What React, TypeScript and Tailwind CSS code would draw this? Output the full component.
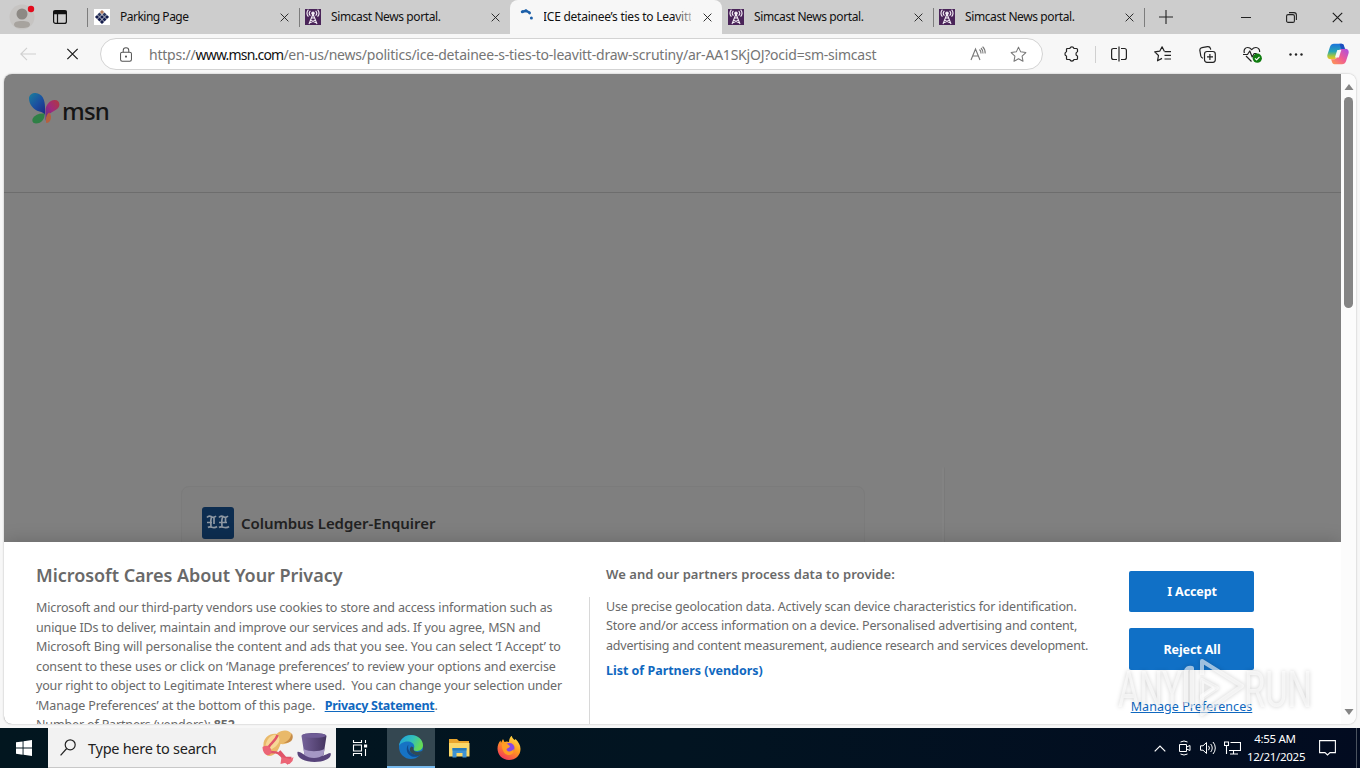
import type { ReactNode } from 'react'

type TabProps = {
  title: string
  icon: ReactNode
  active?: boolean
  divider?: boolean
  titleClass?: string
}

function CloseIcon({ className = '' }: { className?: string }) {
  return (
    <svg viewBox="0 0 10 10" className={className} fill="none" stroke="#1b1b1b" strokeWidth="1">
      <path d="M.7.7l8.6 8.6M9.3.7L.7 9.3" />
    </svg>
  )
}

function ParkingIcon() {
  return (
    <svg viewBox="0 0 16 16" className="h-4 w-4">
      <path fill="#fff" d="M0 0h16v16H0z" />
      <g transform="rotate(45 8 8)">
        <path fill="#b07a5c" d="M3 3h3v3H3z" />
        <path fill="#2e3a60" d="M6.500 3h3v3h-3zM3 6.500h3v3H3z" />
        <path fill="#151d4c" d="M10 3h3v3h-3zM6.500 6.500h3v3h-3zM10 6.500h3v3h-3zM3 10h3v3H3zM6.500 10h3v3h-3zM10 10h3v3h-3z" />
      </g>
    </svg>
  )
}

function TowerIcon() {
  return (
    <svg viewBox="0 0 16 16" className="h-4 w-4" fill="none" stroke="#f4eef6" strokeWidth="1.1">
      <path fill="#4a2459" stroke="none" d="M0 0h16v16H0z" />
      <path d="M8 5L4 15M8 5l4 10M6.5 9h3M5.6 11.2l5.4 2.6M10.4 11.2L5 13.8" />
      <circle cx="8" cy="4.2" r="1.2" fill="#f4eef6" />
      <path d="M5.4 1.8a3.4 3.4 0 0 0 0 4.8M10.6 1.8a3.4 3.4 0 0 1 0 4.8M3.4.7a5.5 5.5 0 0 0 0 7M12.6.7a5.5 5.5 0 0 1 0 7" />
    </svg>
  )
}

function LoadingIcon() {
  return (
    <svg viewBox="0 0 16 16" className="h-4 w-4" fill="#1c5fa8">
      <circle cx="4.3" cy="2.7" r="1.5" />
      <circle cx="8" cy="1.8" r="1.5" />
      <circle cx="11.6" cy="4" r="1.4" />
      <circle cx="13.4" cy="9" r="1.5" />
      <path d="M4 1.5l4-1 4 2-1 2-3-1.2-4 .8z" />
    </svg>
  )
}

function Tab({ title, icon, active, divider, titleClass = '' }: TabProps) {
  return (
    <div
      className={
        active
          ? 'relative flex h-[34px] w-[212px] shrink-0 items-center rounded-t-lg bg-[#f7f7f7] pl-[8px] pr-[10px]'
          : 'relative flex h-[34px] w-[211px] shrink-0 items-center pl-[6px] pr-[10px]'
      }
    >
      {icon}
      <span className="ml-[10px] w-[147px] overflow-hidden whitespace-nowrap text-[12px] text-[#111]">
        <span className={titleClass}>{title}</span>
      </span>
      {active && <span className="absolute right-[24px] top-2 h-5 w-6 bg-gradient-to-r from-transparent to-[#f7f7f7]" />}
      <CloseIcon className="absolute right-[10px] top-[13px] h-[9px] w-[9px]" />
      {divider && <span className="absolute -right-px top-[8px] h-[19px] w-px bg-[#7d7d7d]" />}
    </div>
  )
}

function TabStrip() {
  return (
    <div className="flex h-[34px] items-center bg-[#cdcdcd]">
      <svg viewBox="0 0 26 26" className="ml-[9px] h-[26px] w-[26px]">
        <circle cx="13" cy="13" r="12.5" fill="#c6c4c2" />
        <circle cx="13" cy="10" r="5.5" fill="#8d8984" />
        <path fill="#a7a39e" d="M5 20.5C5 18 8 17 13 17s8 1 8 3.500S18 24 13 24s-8-1-8-3.500z" />
        <circle cx="22" cy="5" r="3.2" fill="#e30b1c" />
      </svg>
      <svg viewBox="0 0 14 14" className="ml-[18px] h-[14px] w-[14px]" fill="none" stroke="#111" strokeWidth="1.2">
        <rect x=".6" y=".6" width="12.8" height="12.800" rx="2" />
        <path fill="#111" d="M1 1h12v2.600H1z" />
        <path d="M4.500 4v9" />
      </svg>
      <span className="ml-[20px] h-[19px] w-px bg-[#7d7d7d]" />
      <Tab title="Parking Page" icon={<ParkingIcon />} divider titleClass="tracking-[-0.5px]" />
      <Tab title="Simcast News portal." icon={<TowerIcon />} titleClass="tracking-[-0.4px]" />
      <Tab title="ICE detainee’s ties to Leavitt" icon={<LoadingIcon />} active titleClass="-ml-px tracking-[-0.25px]" />
      <Tab title="Simcast News portal." icon={<TowerIcon />} divider titleClass="tracking-[-0.4px]" />
      <Tab title="Simcast News portal." icon={<TowerIcon />} divider titleClass="tracking-[-0.4px]" />
      <svg viewBox="0 0 14 14" className="ml-[15px] h-[14px] w-[14px]" stroke="#222" strokeWidth="1.100">
        <path d="M7 0v14M0 7h14" />
      </svg>
      <div className="ml-auto mr-[17px] flex items-center gap-[35px]">
        <span className="h-px w-[10px] bg-[#222]" />
        <svg viewBox="0 0 11 11" className="h-[11px] w-[11px]" fill="none" stroke="#222" strokeWidth="1.100">
          <rect x=".6" y="2.600" width="7.800" height="7.800" rx="1.500" />
          <path d="M3 .600h5a2.400 2.400 0 0 1 2.400 2.400v5" />
        </svg>
        <CloseIcon className="h-[11px] w-[11px]" />
      </div>
    </div>
  )
}

function CopilotIcon() {
  return (
    <svg viewBox="0 0 22 22" className="h-[22px] w-[22px]">
      <defs>
        <linearGradient id="cpA" x1="0" y1="0" x2="0" y2="1">
          <stop offset="0" stopColor="#1b74dd" />
          <stop offset=".5" stopColor="#28a6b5" />
          <stop offset=".8" stopColor="#a8c93a" />
          <stop offset="1" stopColor="#f2c02c" />
        </linearGradient>
        <linearGradient id="cpB" x1="1" y1="0" x2="0" y2="1">
          <stop offset="0" stopColor="#a64fe8" />
          <stop offset=".5" stopColor="#ef5c93" />
          <stop offset="1" stopColor="#ff9b4e" />
        </linearGradient>
      </defs>
      <path fill="url(#cpA)" d="M7 .8h7.500c1.500 0 2 .8 2.500 2.200l.9 3h-3.200c-1.700 0-2.400.8-2.900 2.400L9.700 14c-.5 1.600-1.400 2.200-3 2.200H3.500C.8 16.200-.2 14 .5 11.500L3 3.800C3.700 1.700 5 .8 7 .8z" />
      <path fill="url(#cpB)" d="M15 21.200H7.500c-1.500 0-2-.8-2.500-2.200l-.9-2.800h3c1.700 0 2.600-.8 3.100-2.400L12.300 8c.5-1.600 1.400-2.200 3-2.200h3.200c2.700 0 3.700 2.200 3 4.700L19 18.200c-.7 2.100-2 3-4 3z" />
      <path fill="#1d4fc0" d="M12.500.8h2c1.500 0 2 .8 2.500 2.200l.9 3h-3.200c-1 0-1.500-3.500-2.200-5.200z" />
      <path fill="#f7f7f7" d="M10.300 7h4l-2.400 7.500h-4z" />
    </svg>
  )
}

function Toolbar() {
  return (
    <div className="flex h-10 items-center bg-[#f7f7f7] text-[#222]">
      <svg viewBox="0 0 16 14" className="ml-[20px] h-[14px] w-4" fill="none" stroke="#cfcfcf" strokeWidth="1.100">
        <path d="M16 7H1M7 .8L.8 7 7 13.200" />
      </svg>
      <CloseIcon className="ml-[30px] h-3 w-[13px]" />
      <div className="ml-[21px] flex h-8 w-[943px] items-center rounded-full border border-[#d3d3d3] bg-white pl-[19px] text-[#757575]">
        <svg viewBox="0 0 13 16" className="h-[15px] w-3" fill="none" stroke="#555" strokeWidth="1.100">
          <rect x=".6" y="5.500" width="11.800" height="9.700" rx="1.800" />
          <path d="M3.500 5.500V3.600a3 3 0 0 1 6 0v1.900" />
          <circle cx="6.500" cy="10.300" r=".6" fill="#555" />
        </svg>
        <span className="ml-[17px] whitespace-nowrap text-[14px] tracking-[-0.22px]">
          https://<span className="tracking-[-0.8px] text-[#111]">www.msn.com</span>/en-us/news/politics/ice-detainee-s-ties-to-leavitt-draw-scrutiny/ar-AA1SKjOJ?ocid=sm-simcast
        </span>
        <div className="ml-auto mr-[15px] flex items-center gap-[23px]">
          <svg viewBox="0 0 17 16" className="h-4 w-[17px]" fill="none" stroke="#777" strokeWidth="1.100">
            <path d="M1 14L5.500 3 10 14M2.700 10h5.700M9.500 3.500a5 5 0 0 1 1.500 4M11 2a7 7 0 0 1 2 5.500M12.600.7a9 9 0 0 1 2.600 6.800" />
          </svg>
          <svg viewBox="0 0 18 18" className="h-[17px] w-[17px]" fill="none" stroke="#777" strokeWidth="1.100" strokeLinejoin="round">
            <path d="M9 1.200l2.300 5 5.500.7-4 3.800 1 5.500L9 13.500l-4.800 2.700 1-5.500-4-3.800 5.500-.7z" />
          </svg>
        </div>
      </div>
      <svg viewBox="0 0 16 16" className="ml-[21px] h-4 w-4" fill="none" stroke="#222" strokeWidth="1.200" strokeLinejoin="round">
        <path d="M3.500 2.500h2.300a2.200 2.200 0 0 1 4.200 0h2.500q1 0 1 1v2.300a2.200 2.200 0 0 0 0 4.200v2.500q0 1-1 1H10a2.200 2.200 0 0 1-4.200 0H3.500q-1 0-1-1V10a2.200 2.200 0 0 1 0-4.200V3.500q0-1 1-1z" />
      </svg>
      <span className="ml-[15px] h-[17px] w-px bg-[#d0d0d0]" />
      <svg viewBox="0 0 16 16" className="ml-[15px] h-4 w-4" fill="none" stroke="#222" strokeWidth="1.200">
        <path d="M6 2.500H2.600q-2 0-2 2v7q0 2 2 2H6M10 2.500h3.400q2 0 2 2v7q0 2-2 2H10M8 .5v15" />
      </svg>
      <svg viewBox="0 0 18 16" className="ml-[27px] h-4 w-[18px]" fill="none" stroke="#222" strokeWidth="1.200" strokeLinejoin="round">
        <path d="M10.300 5.200L8.100.8 5.700 5.200l-5 .7 3.800 3.600-1 5.300 4.500-2.400M10.500 5.600H17M10.500 9.300H17M10.500 13H17" />
      </svg>
      <svg viewBox="0 0 17 17" className="ml-[27px] h-[17px] w-[17px]" fill="none" stroke="#222" strokeWidth="1.200">
        <rect x="5.500" y="5.500" width="10.800" height="10.800" rx="2.500" />
        <path d="M10.900 8v6M8 10.900h6M4 12.200c-1.300-.2-2-1-2.200-2.200L.9 4.700C.6 3 1.400 2 3 1.700l5.500-1c1.500-.2 2.600.4 3 2l.2 1" />
      </svg>
      <svg viewBox="0 0 19 17" className="ml-[27px] h-[17px] w-[19px]" fill="none" stroke="#222" strokeWidth="1.200" strokeLinejoin="round">
        <path d="M1.400 7C.4 4 2 1.500 4.700 1.500c1.800 0 3 1 4 2.200 1-1.200 2.300-2.200 4.200-2.200 2.500 0 4 2 3.700 4.500M3 10l5.500 5.500M0 8.500h4.500L6.800 5l2.400 6 2-3.500h2.500" />
        <circle cx="14.300" cy="12.200" r="4.600" fill="#107c10" stroke="none" />
        <path stroke="#fff" d="M12 12.300l1.600 1.600 2.900-3" />
      </svg>
      <svg viewBox="0 0 14 3" className="ml-[27px] h-[3px] w-[14px]" fill="#222">
        <circle cx="1.500" cy="1.500" r="1.200" />
        <circle cx="7" cy="1.500" r="1.200" />
        <circle cx="12.500" cy="1.500" r="1.200" />
      </svg>
      <span className="ml-auto mr-[11px]">
        <CopilotIcon />
      </span>
    </div>
  )
}

function MsnLogo() {
  return (
    <div className="flex items-center">
      <svg viewBox="0 0 31 31" className="h-[31px] w-[31px]">
        <defs>
          <linearGradient id="mA" x1="0" y1="0" x2=".8" y2="1">
            <stop offset="0" stopColor="#1a7f9c" />
            <stop offset=".55" stopColor="#1b50a0" />
            <stop offset="1" stopColor="#1b2f86" />
          </linearGradient>
          <linearGradient id="mB" x1="0" y1="1" x2="1" y2="0">
            <stop offset="0" stopColor="#5b2a94" />
            <stop offset=".5" stopColor="#a02a7c" />
            <stop offset="1" stopColor="#b03a3e" />
          </linearGradient>
        </defs>
        <path fill="url(#mA)" d="M0 5.500C0 2 3 0 6.500 0 13.500.5 16 7 16 14v8c-1-2-3-3-5.500-3.500C4 17 0 10.500 0 5.500z" />
        <path fill="#2f8046" d="M15.500 20.500c.5 5.500-3 10-8.500 10-3.500 0-4.500-3-3-5.500 2-3.200 6-5 11.500-4.500z" />
        <path fill="url(#mB)" d="M16.500 28V18c0-6 4-10.500 9-11 4-.2 6 3.500 4.300 7-2 4.500-12.300 5-13.300 14z" />
        <path fill="#b5603f" d="M17.200 30c-.8-4.500 0-8.500 3-10.500 3.500 4 1.500 10.500-3 10.500z" />
      </svg>
      <span className="ml-[2px] mt-[5px] text-[24px] font-medium leading-[30px] tracking-[-0.8px] text-[#151515]">msn</span>
    </div>
  )
}

function Article() {
  return (
    <div className="flex h-full flex-col bg-[#808080]">
      <header className="h-[119px] shrink-0 border-b border-[#6d6d6d] pl-[25px] pt-[17px]">
        <MsnLogo />
      </header>
      <div className="mt-auto flex h-[257px] items-end pl-[177px]">
        <div className="h-[238px] w-[684px] rounded-t-lg border border-[#7b7b7b] bg-[#7f7f7f] pl-[20px] pt-[20px]">
          <div className="flex items-center">
            <div className="flex h-8 w-8 items-center justify-center rounded-[3px] bg-[#0d2d50]">
              <svg viewBox="0 0 24 18" className="h-[18px] w-6" fill="none" stroke="#8d97a2" strokeWidth="1.700">
                <path d="M1 3.500c2-2.500 4-1 5-.5s2.500.5 4-1M6 2.500c-2 3-1 8-1 10M2 13.500c3-2.500 5 2.500 9-1M1 8.500h5M8 3v7M13 3.500c2-2.500 4-1 5-.5s2.500.5 4-1M17 2.500c-2 3-1 8-1 10M13 13.500c3-2.500 6 2.500 10-1M13 8.500h8M19.500 4v5" />
              </svg>
            </div>
            <span className="ml-[7px] whitespace-nowrap text-[15px] font-semibold tracking-[-0.06px] text-[#222]">Columbus Ledger-Enquirer</span>
          </div>
        </div>
        <div className="ml-[77px] h-[257px] w-[3px] rounded-t-sm border-r border-[#7a7a7a] bg-[#838383]" />
      </div>
    </div>
  )
}

function PrivacyBanner() {
  return (
    <div className="absolute inset-x-0 bottom-0 flex h-[182px] overflow-hidden bg-white text-[#696969] shadow-[0_0_18px_rgba(0,0,0,0.2)]">
      <div className="w-[554px] shrink-0 whitespace-nowrap pl-8 pt-[21px]">
        <h2 className="text-[18px] font-semibold leading-6 tracking-[-0.04px]">Microsoft Cares About Your Privacy</h2>
        <div className="mt-[11px] text-[12.500px] leading-[19.500px]">
          <p className="tracking-[-0.135px]">Microsoft and our third-party vendors use cookies to store and access information such as</p>
          <p className="tracking-[-0.135px]">unique IDs to deliver, maintain and improve our services and ads. If you agree, MSN and</p>
          <p className="tracking-[-0.1px]">Microsoft Bing will personalise the content and ads that you see. You can select ‘I Accept’ to</p>
          <p className="tracking-[-0.105px]">consent to these uses or click on ‘Manage preferences’ to review your options and exercise</p>
          <p className="tracking-[-0.165px]">your right to object to Legitimate Interest where used.&nbsp; You can change your selection under</p>
          <p className="tracking-[-0.12px]">
            ‘Manage Preferences’ at the bottom of this page.&nbsp;&nbsp;{' '}
            <a className="font-bold tracking-[-0.27px] text-[#1068bf] underline">Privacy Statement</a>.
          </p>
          <p className="tracking-[-0.15px]">
            Number of Partners (vendors): <b>852</b>
          </p>
        </div>
      </div>
      <div className="ml-[31px] mt-[55px] w-px shrink-0 bg-[#d8d8d8]" />
      <div className="ml-4 w-[523px] shrink-0 whitespace-nowrap pt-[23px] text-[12.500px] leading-[19.500px]">
        <h3 className="text-[13px] font-semibold tracking-[0.07px]">We and our partners process data to provide:</h3>
        <div className="mt-[12px]">
          <p className="tracking-[-0.135px]">Use precise geolocation data. Actively scan device characteristics for identification.</p>
          <p className="tracking-[-0.175px]">Store and/or access information on a device. Personalised advertising and content,</p>
          <p className="tracking-[-0.21px]">advertising and content measurement, audience research and services development.</p>
        </div>
        <a className="mt-[6px] block font-bold tracking-[-0.02px] text-[#1068bf]">List of Partners (vendors)</a>
      </div>
      <div className="flex w-[125px] shrink-0 flex-col pt-[29px] text-[12.500px]">
        <button className="h-[41px] rounded-[2px] bg-[#1070c6] pl-px pt-[2px] font-bold tracking-[-0.1px] text-white">I Accept</button>
        <button className="mt-4 h-[42px] rounded-[2px] bg-[#1070c6] pl-px pt-[2px] font-bold tracking-[-0.1px] text-white">Reject All</button>
        <a className="mt-[27px] whitespace-nowrap text-center leading-5 tracking-[0.05px] text-[#1068bf] underline">Manage Preferences</a>
      </div>
    </div>
  )
}

function Watermark() {
  return (
    <svg viewBox="0 0 200 66" className="absolute left-[1114px] top-[656px] h-[66px] w-[200px] drop-shadow-[0_0_2px_rgba(0,0,0,0.3)]">
      <g fill="#fff" fillOpacity=".6" fontFamily="Roboto, sans-serif" fontSize="50">
        <text x="4" y="51" textLength="64" lengthAdjust="spacingAndGlyphs">ANY</text>
        <text x="130" y="51" textLength="68" lengthAdjust="spacingAndGlyphs">RUN</text>
      </g>
      <g fill="none" stroke="#fff" strokeOpacity=".6" strokeWidth="4" strokeLinejoin="round">
        <path d="M88 19V5l40 25-40 28V40l12-8M78 52V12q-6-1-6 4v34" />
        <path fill="#fff" fillOpacity=".5" d="M88 24l15 8-15 10z" />
      </g>
    </svg>
  )
}

function SearchHats() {
  return (
    <svg viewBox="0 0 70 36" className="h-9 w-[71px]">
      <path fill="#e9b96a" d="M2 17C1 8 8 3 15 4c6-5 13-4 15 0 2 6-3 11-11 10-2 7-6 12-11 12-4 0-6-5-6-9z" />
      <path fill="#f7d796" d="M5 12C9 3 17 3 18 9c0 6-7 11-12 11-3-1-2-5-1-8z" />
      <path fill="#c68c48" d="M22 13c4-1 8-6 8-10 3 4 1 11-8 10z" />
      <path fill="none" stroke="#e05468" strokeWidth="2.500" d="M6 20c1-6 8-8 10-15M8 22c5 0 8 0 11 3l8 9M18 21l6 7 6 0" />
      <path fill="#ec6576" d="M1 17c5-3 9 0 9 5-2 6-9 3-9-5zM20 27l9 2 3-2-1 4-3 3-5-1-4 1z" />
      <defs>
        <linearGradient id="hat" x1="0" x2="1">
          <stop offset="0" stopColor="#75629a" />
          <stop offset="1" stopColor="#44345f" />
        </linearGradient>
      </defs>
      <path fill="#57437a" d="M36 22c2-1 6 3 10 4h15c3-1 6-3 8-3 2 5-6 9-16 9s-18-4-17-10z" />
      <path fill="url(#hat)" d="M40 6c0-4 24-4 25 0l-3 19c-4 4-15 4-19 0z" />
      <path fill="#a597c4" d="M42 19c6 3 15 3 21 0l-1 6c-5 4-14 4-19 0z" />
      <ellipse cx="52.500" cy="5.500" rx="12" ry="2.300" fill="#6f5c96" />
    </svg>
  )
}

function EdgeIcon() {
  return (
    <svg viewBox="0 0 24 24" className="h-6 w-6">
      <defs>
        <linearGradient id="edA" x1="0" y1="0" x2="1" y2=".4">
          <stop offset="0" stopColor="#1b9de2" />
          <stop offset=".6" stopColor="#35c1b5" />
          <stop offset="1" stopColor="#65da55" />
        </linearGradient>
      </defs>
      <circle cx="12" cy="12" r="12" fill="#1673c4" />
      <path fill="url(#edA)" d="M0 11C.5 4.800 5.800 0 12 0c6.500 0 12 4.500 12 10.300 0 3.700-3 5.700-6 5.700-2.500 0-4-1-3.600-2 .4-.6.9-1.200.9-2.400C15.300 8.500 12 6.500 8.500 6.500 4 6.500.8 9 0 11z" />
      <path fill="#114a8b" d="M9.500 9.500C7 12 7 17 10.500 20c3 2.700 8 2.500 11.500-.8-5 1.800-10.500-.2-12.300-4.200-.8-2-.7-4-.2-5.500z" />
      <path fill="#324a55" d="M14.500 14c0 3 5 4 9 1.500l1 1-2 3.200c-4 1.500-10-.2-11.500-3.700-.7-2 .3-4 1.500-4.500 1 0 2.500 1 2 2.500z" />
    </svg>
  )
}

function Taskbar() {
  return (
    <div className="flex h-10 items-center bg-linear-to-r from-[#02161f] via-[#021421] to-[#020b20] text-white">
      <svg viewBox="0 0 16 16" className="ml-4 h-4 w-4" fill="#fff">
        <path d="M0 2.300L6.600 1.400v6.200H0zM7.500 1.200L16 0v7.600H7.500zM0 8.500h6.600v6.200L0 13.800zM7.500 8.500H16V16l-8.500-1.200z" />
      </svg>
      <div className="ml-4 flex h-10 w-[288px] items-center border-b border-[#c8c8c8] bg-[#f2f2f2] pl-[12px] text-[#222]">
        <svg viewBox="0 0 16 17" className="h-[17px] w-4" fill="none" stroke="#222" strokeWidth="1.200">
          <circle cx="10.200" cy="5.800" r="5" />
          <path d="M6.700 9.500L.6 16.300" />
        </svg>
        <span className="ml-[12px] mt-[3px] whitespace-nowrap text-[14.500px] tracking-[-0.27px]">Type here to search</span>
        <span className="ml-auto mr-[4px]">
          <SearchHats />
        </span>
      </div>
      <svg viewBox="0 0 16 16" className="ml-4 h-4 w-4" fill="none" stroke="#fff" strokeWidth="1.100">
        <path d="M1.500 0v2.500h8V0M1.500 16v-2.500h8V16M1.500 5h8v6h-8zM13.500 0v3M13.500 9v7" />
        <path fill="#fff" d="M12.600 5h2v2h-2z" />
      </svg>
      <div className="ml-[19px] flex h-10 w-12 items-center justify-center border-b-2 border-[#76b9ed] bg-[#344751]">
        <EdgeIcon />
      </div>
      <svg viewBox="0 0 22 20" className="ml-[14px] h-5 w-[22px]">
        <path fill="#e9a52c" d="M0 1h8l2 2h10v4H0z" />
        <path fill="#fbd868" d="M0 5h20.500v13.500H0z" />
        <path fill="#3e93d3" d="M3.500 10h14v9.500h-4V15h-6v4.500h-4z" />
        <path fill="#267ab9" d="M3.500 10h14v2.500h-14z" />
      </svg>
      <svg viewBox="0 0 24 24" className="ml-[26px] h-6 w-6">
        <defs>
          <linearGradient id="fx" x1=".8" y1="0" x2=".2" y2="1">
            <stop offset="0" stopColor="#ffe24a" />
            <stop offset=".45" stopColor="#ff9a1f" />
            <stop offset="1" stopColor="#f22f5f" />
          </linearGradient>
        </defs>
        <path fill="url(#fx)" d="M12 24C5.500 24 .5 19 .5 12.500c0-3 1-6 3-8l.5 2.300L6 3l1.500 3c1.500-.7 3-.7 4.500 0 .1-3 1-5 2.800-6.200.2 2 1.500 3 3 4.200l.7-1c3 3 5 6 5 10C23.500 19.500 18.500 24 12 24z" />
        <circle cx="12.500" cy="12" r="5" fill="#8748e5" />
        <path fill="#ff9d25" d="M5 8c3-1.500 5-.5 6.500 1 1 .6 1.600 1 1.200 2-1.200 1-3 1.200-3.200 2.500 1 3 5.500 2.500 7-.5 1 4-2 6.500-5.500 6C7 18.500 4.500 13 5 8z" />
      </svg>
      <div className="ml-auto flex h-10 items-center">
        <svg viewBox="0 0 12 7" className="h-[7px] w-3" fill="none" stroke="#fff" strokeWidth="1.200">
          <path d="M.7 6.300L6 1l5.300 5.300" />
        </svg>
        <svg viewBox="0 0 13 16" className="ml-[12px] h-4 w-[13px]" fill="none" stroke="#fff" strokeWidth="1">
          <path d="M2.500 2a7 7 0 0 1 7 0M2.500 14a7 7 0 0 0 7 0M1.500 4.500h7v7h-7zM8.500 7L12 5.500v5L8.500 9" />
        </svg>
        <svg viewBox="0 0 17 14" className="ml-[9px] h-[14px] w-[17px]" fill="none" stroke="#fff" strokeWidth="1">
          <path d="M.5 4.800H3L6.500 1.500v11L3 9.200H.5zM8.500 4.800a3.300 3.300 0 0 1 0 4.400M10.700 3a6 6 0 0 1 0 8M13 1a9 9 0 0 1 0 12" />
        </svg>
        <svg viewBox="0 0 17 14" className="ml-[7px] h-[14px] w-[17px]" fill="none" stroke="#fff" strokeWidth="1.100">
          <path d="M6.500 1.500h10v8H5M9.500 9.500v3M6 13h8M.5 1h4v3.500h-4zM2.500 4.500V13" />
        </svg>
        <div className="ml-[6px] w-[58px] whitespace-nowrap text-center text-[11.500px] leading-[18px] tracking-[-0.3px]">
          <div className="pr-[2px]">4:55 AM</div>
          <div>12/21/2025</div>
        </div>
        <svg viewBox="0 0 17 16" className="ml-[14px] mr-[20px] h-4 w-[17px]" fill="none" stroke="#fff" strokeWidth="1.100">
          <path d="M.6.600h15.800v12H11L8.500 15 6 12.600H.6z" />
        </svg>
        <span className="mr-[3px] h-10 w-px bg-[#4a525e]" />
      </div>
    </div>
  )
}

export default function App() {
  return (
    <div className="relative flex h-[768px] w-[1360px] flex-col overflow-hidden bg-[#f7f7f7] font-['Noto_Sans','Open_Sans',sans-serif]">
      <TabStrip />
      <Toolbar />
      <div className="mx-1 mb-1 flex h-[650px] overflow-hidden rounded-lg bg-white shadow-[0_0_2px_rgba(0,0,0,0.3)]">
        <div className="relative w-[1337px] overflow-hidden">
          <Article />
          <PrivacyBanner />
        </div>
        <div className="flex w-[15px] flex-col items-center bg-[#fcfcfc]">
          <svg viewBox="0 0 10 6" className="mt-[10px] h-[6px] w-[10px]" fill="#858585">
            <path d="M5 0l4.500 6H.5z" />
          </svg>
          <div className="mt-[7px] h-[211px] w-[9px] rounded-full bg-[#858585]" />
          <svg viewBox="0 0 10 6" className="mb-[9px] mt-auto h-[6px] w-[10px]" fill="#858585">
            <path d="M5 6L.5 0h9z" />
          </svg>
        </div>
      </div>
      <Taskbar />
      <Watermark />
    </div>
  )
}
